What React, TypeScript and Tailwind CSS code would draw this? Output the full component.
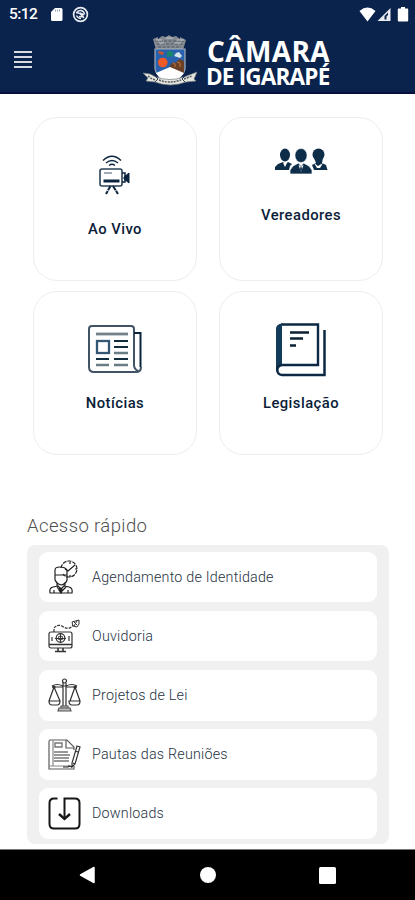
import type { ReactNode } from "react";

const NAVY = "#0a2440";

function StatusBar() {
  return (
    <div className="flex h-[28px] items-center text-white">
      <span className="ml-[9px] w-[31px] pt-px text-[15.5px] leading-none font-medium tracking-[-0.55px]">5:12</span>
      <svg className="ml-[10px]" width="13" height="15" viewBox="0 0 13 15">
        <path d="M5 1H11Q12.500 1 12.500 2.500V12.500Q12.500 14 11 14H2.500Q1 14 1 12.500V5Z" fill="#fff" />
        <path d="M5.500 2.500v2M7.500 2.500v2M9.500 2.500v2" stroke="#8a98ac" strokeWidth=".9" />
      </svg>
      <svg className="ml-[9px]" width="17" height="17" viewBox="0 0 17 17" fill="none" stroke="#e8ebf0">
        <circle cx="8.500" cy="8.500" r="6.900" strokeWidth="1.700" />
        <path d="M4.500 7Q6 4 9 4.500T12.500 8.500M4.500 9.500Q6 12.500 9 12.500" strokeWidth="1.500" />
        <path d="M4 6.500 8 7.500 12 12M7 10.500 12 11M8 7l4 2" strokeWidth="1.400" />
      </svg>
      <svg className="ml-auto" width="17" height="15" viewBox="0 0 17 15">
        <path d="M.5 4Q8.500-2.800 16.500 4L8.500 14.500Z" fill="#fff" />
      </svg>
      <svg width="16" height="15" viewBox="0 0 16 15">
        <path d="M1.500 14 14.500 1V14Z" fill="#e8ebf0" />
        <path d="M8.500 12.500V9L12 5.500V8L10.500 9.500V12.500Z" fill="#0a234c" />
      </svg>
      <svg className="mr-[6px] ml-[5px]" width="12" height="15" viewBox="0 0 12 15">
        <path d="M4 0h4v1.500h2.500q.7 0 .7 1v11q0 1-1 1H1.800q-1 0-1-1v-11q0-1 .7-1H4z" fill="#fff" />
      </svg>
    </div>
  );
}

function Crest() {
  return (
    <svg width="57" height="53" viewBox="0 0 57 53">
      <path d="M11 4 16 2v2l4-3 4 1 3-2 3 2 4-1 4 3V2l6 3-3 10H14Z" fill="#858b91" />
      <path d="M13 6h29M15 9h26M16 12h23" stroke="#4f5964" strokeWidth="1" strokeDasharray="3 1.500" />
      <path d="M14 5h6M24 3h7M35 5h7M17 8h5M33 8h6" stroke="#c4c7c8" />
      <path d="M13 14H43V34Q42 42 28 47Q14 42 13 34Z" fill="#2861ad" stroke="#a6afba" strokeWidth="1.200" />
      <path d="m16 16 6 1-1 3-4-1z" fill="#c35435" />
      <path d="m25 17 3-1 4 2-2 4-3-1-2 2z" fill="#17876a" />
      <path d="m32 21 2-3 3-1 3 4-2 2z" fill="#d4e2eb" />
      <circle cx="20.800" cy="27.500" r="4.800" fill="#f05a26" />
      <path d="m27 32 4-5 3 1 3-4 5 2v12l-7-1z" fill="#6c4026" />
      <path d="m31 28 2 1v3m2-5 3 1v4" stroke="#bf7636" fill="none" />
      <path d="m14 38 14-6 14 6-6 7H19z" fill="#fff" />
      <path d="M1 38 8 39 14 42Q28 47 42 42L55 37 52 44 54 46 44 47Q28 53 13 47L4 46 6 43Z" fill="#e4e5df" stroke="#767e82" strokeWidth=".7" />
      <path d="m6 41 4 3 4 1m3 0q10 4 22 0m3-1 8-3" stroke="#53565a" strokeWidth="1.500" strokeDasharray="2 1" fill="none" />
      <path d="m13 41 3 3-3 3M43 41l-3 3 3 3" stroke="#33404e" fill="none" />
    </svg>
  );
}

function Header() {
  return (
    <header className="flex h-[94px] shrink-0 flex-col border-b-2 border-[#061140] bg-[#0a234c]">
      <StatusBar />
      <div className="flex">
        <div className="mt-[23px] ml-[14px] flex h-[17px] w-[18px] flex-col justify-between">
          <i className="h-[2px] bg-[#d8dbe0]" />
          <i className="h-[2px] bg-[#d8dbe0]" />
          <i className="h-[2px] bg-[#d8dbe0]" />
          <i className="h-[2px] bg-[#d8dbe0]" />
        </div>
        <div className="mt-[7px] ml-[110px]">
          <Crest />
        </div>
        <div className="ml-[8px] pt-[7px] font-['Open_Sans'] font-bold whitespace-nowrap text-white">
          <div className="text-[28px] leading-[32px] tracking-[0.4px]">CÂMARA</div>
          <div className="-ml-px text-[22.5px] leading-[19px] tracking-[-0.8px]">DE IGARAPÉ</div>
        </div>
      </div>
    </header>
  );
}

function CameraIcon() {
  return (
    <svg width="32" height="41" viewBox="0 0 32 41" fill="none" stroke={NAVY}>
      <path d="M4 5.500Q13-3 22 5.500" strokeWidth="1.500" />
      <path d="M7 8Q13 3 19 8M10 10.500Q13 8 16 10.500" strokeWidth="1.300" />
      <rect x="1" y="14" width="22" height="17" rx="2" strokeWidth="1.600" stroke="#2a4158" />
      <path d="M5 18h8" stroke="#8290a0" strokeWidth="1.500" />
      <path d="M4.500 26h16" strokeWidth="3" />
      <path d="M23 18h3v9h-3" strokeWidth="1.500" />
      <path d="m25 22 5-4v10l-5-4z" fill={NAVY} />
      <path d="m11.500 31-4.500 8M14 31l5 8" strokeWidth="2" strokeDasharray="5 .7" />
    </svg>
  );
}

function PeopleIcon() {
  return (
    <svg width="54" height="27" viewBox="0 0 54 27" fill="#0d2d49">
      <ellipse cx="11" cy="7" rx="5" ry="6.500" />
      <path d="M1 22v-3l3-3 5-2 2 3 3-3 4 2-2 2-1 4z" />
      <path d="m9 15 2 4 2-4-2 1z" fill="#fff" />
      <circle cx="44.500" cy="6.500" r="6" />
      <path d="M40 10h9l-1 5 4 2 1.500 5H40l-2-5 4-2z" />
      <path d="m40 15 4 3 5-3-3 5h-3z" fill="#fff" />
      <ellipse cx="27" cy="7.500" rx="6" ry="7" stroke="#fff" strokeWidth=".5" />
      <path d="M16 26v-4l3-4 5.500-3 2.500 3 2.500-3 5.500 3 3 4v4z" stroke="#fff" strokeWidth=".7" />
      <path d="m24.500 17 2.500 7 2.500-7-2.500 1z" fill="#fff" />
      <path d="m27 17-1 4 1 4 1-4z" />
    </svg>
  );
}

function NewsIcon() {
  return (
    <svg width="54" height="48" viewBox="0 0 54 48" fill="none" stroke="#415466">
      <path d="M46 40V4Q46 1 43 1H4Q1 1 1 4V42Q1 47 6 47H48Q53 47 53 42M46 40Q46 44 50 46" strokeWidth="2" />
      <path d="M46 8H52.500V42" stroke={NAVY} strokeWidth="2" />
      <path d="M8 9H40" stroke="#748087" strokeWidth="2.800" />
      <rect x="9" y="16" width="12" height="12" stroke="#345873" strokeWidth="2.300" />
      <path d="M26 16H40M26 22H40M8 34H21M26 34H40" stroke="#112e3e" strokeWidth="2" />
      <path d="M26 28H40M8 40H21M26 40H40" stroke="#6a7c84" strokeWidth="2.400" />
    </svg>
  );
}

function BookIcon() {
  return (
    <svg width="50" height="54" viewBox="0 0 50 54" fill="none" stroke="#0b2844">
      <path d="M5 1.500H42V42H6" strokeWidth="2.400" />
      <path d="M0 48V6Q0 1 6 .5V42Q2 42 1.500 48Z" fill="#123c59" stroke="none" />
      <path d="M6 42Q1.300 42.500 1.300 47T6 52H48.500V7" strokeWidth="2.500" />
      <path d="M14 9.500H33M14 15.500H27M14 22.500H20" stroke="#0d2030" strokeWidth="2.400" />
    </svg>
  );
}

function Card({ label, icon, className }: { label: string; icon: ReactNode; className: string }) {
  return (
    <div className={`flex h-[164px] w-[164px] flex-col items-center rounded-[24px] border border-[#ededed] bg-white ${className}`}>
      {icon}
      <span className="mt-auto text-[14.8px] leading-[18px] font-medium tracking-[0.45px] text-[#0a1d38]">{label}</span>
    </div>
  );
}

function AppointmentIcon() {
  return (
    <svg width="32" height="34" viewBox="0 0 32 34" fill="none" stroke="#202020" strokeWidth="1.200">
      <path d="M13 8a8 8 0 1 1 8 9q-4 0-6-3" strokeDasharray="4 1" />
      <path d="m27 5-7 6-3-2M22 2v2M29 9h-2M22 17v-2" />
      <path d="M7 10q0-3 5-3 5 0 7 3v5H7zM7 14v6q2 4 6 5 5-1 6-5v-6M9 22v4M17 22v4M2 33q-1-5 3-6l5-1 3 3 3-3 5 1q4 1 3 6zM9 27l4 5 5-5M6 30v3m14-3v3" />
      <path d="m12 28 2 1-1 4-2-3z" fill="#222" />
    </svg>
  );
}

function OmbudsmanIcon() {
  return (
    <svg width="33" height="34" viewBox="0 0 33 34" fill="none" stroke="#333" strokeWidth="1.200">
      <rect x="1" y="13" width="23" height="16" rx="2" />
      <path d="M1 25.500h23M10 29v3m5-3v3M7 32.500h11" strokeWidth="1.600" />
      <circle cx="12.500" cy="19" r="4.300" />
      <path d="M7 19.500h11M12.500 14.500v9M4 18v4M21 17v5" />
      <path d="M10.500 17.500h4v3h-4z" strokeWidth=".8" />
      <path d="M6 13V9q3-4 8-2 7 5 11-1" strokeDasharray="3 1" />
      <path d="m24 3 7-2v4l-2 3-4-1zM25 2l4 4m0-4-3 5" strokeWidth="1" />
    </svg>
  );
}

function ScalesIcon() {
  return (
    <svg width="33" height="34" viewBox="0 0 33 34" fill="none" stroke="#303030" strokeWidth="1.200">
      <circle cx="16.500" cy="3" r="2" />
      <path d="M15 5v23m3-23v23M4 8q5-3 11 0h3q6-3 11 0M4 9h11m3 0h11M6 9 1 23m5-14 6 14M27 9l-5 14m5-14 5 14M1 23h11q0 4-3 4H4q-3 0-3-4zM21 23h11q0 4-3 4h-5q-3 0-3-4z" />
      <path d="M11 30h11l1 3H10zM13 28h7v2h-7z" fill="#bbb" stroke="#555" />
      <circle cx="6" cy="9" r="1" /><circle cx="27" cy="9" r="1" />
    </svg>
  );
}

function AgendaIcon() {
  return (
    <svg width="33" height="33" viewBox="0 0 33 33" fill="none" stroke="#5c5c5c" strokeWidth="1.200">
      <path d="M26 12V9l-7-7H2Q1 2 1 5v26h25v-3" />
      <path d="M5 2v26h18M1 28h4" stroke="#888" />
      <path d="M18 2v8h8" />
      <path d="M7 5h7v4H7zM6 14h14M6 17h16M6 20h15M6 23h15" stroke="#777" strokeWidth="1.400" />
      <path d="m29 8 3 1-5 17-3 3v-4zM27 13l3 1m-5 11 2 1" stroke="#333" />
      <path d="M15 29h5l1-1 3 1" stroke="#222" />
    </svg>
  );
}

function DownloadIcon() {
  return (
    <svg width="33" height="33" viewBox="0 0 33 33" fill="none" stroke="#171717" strokeWidth="2">
      <path d="M9.500 1.500H6Q1.500 1.500 1.500 6V27Q1.500 31.500 6 31.500H27Q31.500 31.500 31.500 27V6Q31.500 1.500 27 1.500H16.500V22" />
      <path d="m11 17 5.500 5L22 17" strokeWidth="2.400" />
    </svg>
  );
}

const shortcuts: { label: string; icon: ReactNode }[] = [
  { label: "Agendamento de Identidade", icon: <AppointmentIcon /> },
  { label: "Ouvidoria", icon: <OmbudsmanIcon /> },
  { label: "Projetos de Lei", icon: <ScalesIcon /> },
  { label: "Pautas das Reuniões", icon: <AgendaIcon /> },
  { label: "Downloads", icon: <DownloadIcon /> },
];

export default function App() {
  return (
    <div className="flex h-[900px] w-[415px] flex-col overflow-hidden bg-white font-['Roboto',sans-serif]">
      <Header />
      <main className="flex flex-1 flex-col">
        <div className="mt-[22.500px] ml-[33px] grid w-[350px] grid-cols-2 gap-x-[22px] gap-y-[10.500px]">
          <Card label="Ao Vivo" icon={<CameraIcon />} className="pt-[37px] pb-[42px]" />
          <Card label="Vereadores" icon={<PeopleIcon />} className="pt-[30px] pb-[56px]" />
          <Card label="Notícias" icon={<NewsIcon />} className="pt-[33px] pb-[42px]" />
          <Card label="Legislação" icon={<BookIcon />} className="pt-[31px] pb-[42px]" />
        </div>
        <h2 className="mt-[60px] ml-[27px] text-[18.5px] leading-[22px] font-light tracking-[0.4px] text-[#505050]">Acesso rápido</h2>
        <div className="mt-[8px] ml-[27px] flex h-[299px] w-[362px] flex-col gap-[8.500px] rounded-[8px] bg-[#f0f0f0] px-[12px] pt-[6.500px]">
          {shortcuts.map((item) => (
            <div key={item.label} className="flex h-[50.700px] shrink-0 items-center rounded-[9px] bg-white">
              <div className="ml-[9px] flex w-[33px] items-center">{item.icon}</div>
              <span className="ml-[11px] pt-px text-[14.3px] font-light tracking-[0.22px] whitespace-nowrap text-[#26333f]">{item.label}</span>
            </div>
          ))}
        </div>
      </main>
      <nav className="flex h-[51px] shrink-0 items-center border-t border-[#777] bg-black">
        <svg className="ml-[79px]" width="17" height="18" viewBox="0 0 17 18"><path d="M15 1.500V16.500L1.500 9Z" fill="#fff" stroke="#fff" strokeWidth="1.500" strokeLinejoin="round" /></svg>
        <i className="ml-[104px] h-[16px] w-[16px] rounded-full bg-white" />
        <i className="ml-[103px] h-[17px] w-[17px] rounded-[1.500px] bg-white" />
      </nav>
    </div>
  );
}
